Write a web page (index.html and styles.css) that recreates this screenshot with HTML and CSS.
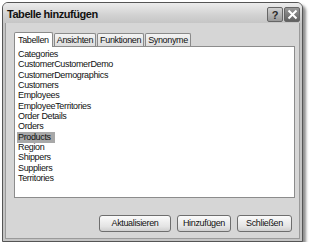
FILE: index.html
```html
<!DOCTYPE html>
<html>
<head>
<meta charset="utf-8">
<link rel="stylesheet" href="styles.css">
</head>
<body>
<div class="window">
  <div class="titlebar">
    <span class="title">Tabelle hinzufügen</span>
    <div class="tbtns">
      <span class="tbtn help">?</span>
      <span class="tbtn close"><svg width="11" height="11" viewBox="0 0 11 11"><path d="M1.5 1.5 L9.5 9.5 M9.5 1.5 L1.5 9.5" stroke="#fff" stroke-width="2" fill="none"/></svg></span>
    </div>
  </div>
  <div class="body">
    <div class="tabs">
      <span class="tab active">Tabellen</span>
      <span class="tab">Ansichten</span>
      <span class="tab">Funktionen</span>
      <span class="tab">Synonyme</span>
    </div>
    <div class="list">
      <div class="item">Categories</div>
      <div class="item">CustomerCustomerDemo</div>
      <div class="item">CustomerDemographics</div>
      <div class="item">Customers</div>
      <div class="item">Employees</div>
      <div class="item">EmployeeTerritories</div>
      <div class="item">Order Details</div>
      <div class="item">Orders</div>
      <div class="item"><span class="sel">Products</span></div>
      <div class="item">Region</div>
      <div class="item">Shippers</div>
      <div class="item">Suppliers</div>
      <div class="item">Territories</div>
    </div>
    <div class="buttons">
      <span class="btn w1">Aktualisieren</span>
      <span class="btn w2">Hinzufügen</span>
      <span class="btn w3">Schließen</span>
    </div>
  </div>
</div>
</body>
</html>
```
FILE: styles.css
```css
html, body {
  margin: 0;
  padding: 0;
  background: #ffffff;
}
body {
  font-family: "Liberation Sans", Arial, sans-serif;
  font-size: 9px;
  letter-spacing: -0.35px;
  color: #111;
}
.window {
  margin: 2px 0 0 2px;
  width: 299px;
  height: 238px;
  border: 1px solid #555;
  border-radius: 6px 6px 0 0;
  background: #d6d6d6;
  box-shadow: 3px 3px 3px rgba(0,0,0,0.45);
  display: flex;
  flex-direction: column;
  overflow: hidden;
}
.titlebar {
  height: 20px;
  flex: none;
  background: linear-gradient(#ececec, #d2d2d2 60%, #c6c6c6);
  display: flex;
  align-items: center;
  justify-content: space-between;
  padding: 0 2px 0 4px;
}
.title {
  font-weight: bold;
  font-size: 11px;
  letter-spacing: -0.45px;
  color: #111;
  padding-top: 1px;
}
.tbtns {
  display: flex;
  gap: 1px;
  padding-top: 3px;
}
.tbtn {
  width: 14px;
  height: 13px;
  border: 1px solid #666;
  border-radius: 2px;
  display: flex;
  align-items: center;
  justify-content: center;
  font-weight: bold;
  font-size: 11px;
  letter-spacing: 0;
  color: #fff;
}
.help {
  background: linear-gradient(#d0d0d0, #9a9a9a);
  color: #2a2a2a;
}
.close {
  background: linear-gradient(#9a9a9a, #606060);
}
.body {
  flex: 1;
  border: 2px solid #c4c4c4;
  border-top: none;
  box-shadow: inset 1px 0 0 #9a9a9a, inset -1px 0 0 #9a9a9a, inset 0 -1px 0 #9a9a9a;
  display: flex;
  flex-direction: column;
  padding: 8px 7px 0 9px;
}
.tabs {
  display: flex;
  align-items: flex-end;
  height: 15px;
  gap: 1px;
}
.tab {
  height: 12px;
  line-height: 12px;
  padding: 0 2px;
  border: 1px solid #8a8a8a;
  border-bottom: none;
  border-radius: 2px 2px 0 0;
  background: linear-gradient(#f4f4f4, #dedede);
}
.tab.active {
  height: 14px;
  line-height: 14px;
  background: #fff;
  position: relative;
  top: 1px;
  padding: 0 3px;
}
.list {
  height: 148px;
  width: 277px;
  border: 1px solid #8c8c8c;
  background: #fff;
  padding: 2px 0 0 2px;
  flex: none;
}
.item {
  height: 10.33px;
  line-height: 10.33px;
  padding-left: 1px;
}
.sel {
  background: #a8a8a8;
  display: inline-block;
  margin-left: -1px;
  padding: 0 4px 0 1px;
  line-height: 11px;
}
.buttons {
  display: flex;
  justify-content: flex-end;
  gap: 6px;
  margin-top: 17px;
  padding-right: 1px;
}
.btn {
  height: 15px;
  line-height: 15px;
  border: 1px solid #6e6e6e;
  border-radius: 3px;
  background: linear-gradient(#fbfbfb, #e4e4e4 70%, #cfcfcf);
  text-align: center;
}
.w1 { width: 70px; }
.w2 { width: 52px; }
.w3 { width: 53px; }
```
